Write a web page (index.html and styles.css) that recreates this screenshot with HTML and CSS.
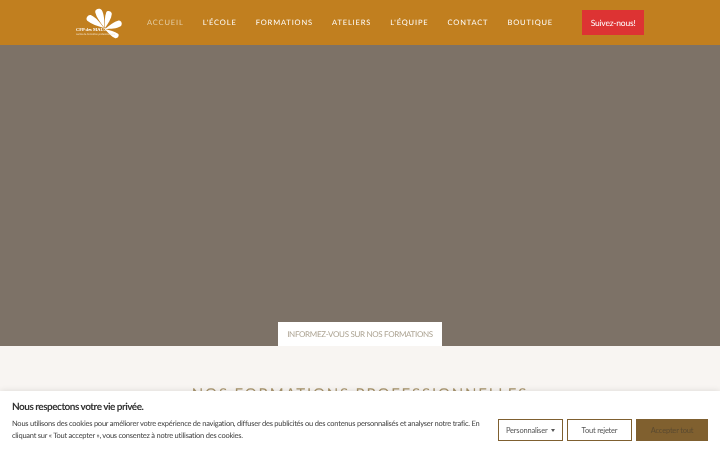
FILE: index.html
```html
<!DOCTYPE html>
<html lang="fr">
<head>
  <meta charset="UTF-8">
  <meta name="viewport" content="width=device-width, initial-scale=1.0">
  <title>CFP des MAUX</title>
  <link rel="stylesheet" href="styles.css">
</head>
<body>

  <!-- Header -->
  <header class="site-header">
    <a class="logo" href="#">
      <svg class="logo-flower" viewBox="0 0 38 34" width="38" height="34">
        <defs>
          <path id="petal" d="M0 0 C-2 -6 -4 -12 -3.500 -17 C-3 -20 2 -20 3 -17 C4 -12 2 -6 0 0 Z"/>
        </defs>
        <g fill="#ffffff">
          <use href="#petal" transform="translate(18 22) rotate(-55) scale(1.05)"/>
          <use href="#petal" transform="translate(18.500 22) rotate(-19) scale(1.05)"/>
          <use href="#petal" transform="translate(19 22) rotate(16) scale(0.9)"/>
          <use href="#petal" transform="translate(19 23) rotate(70) scale(0.92)"/>
          <use href="#petal" transform="translate(19 23) rotate(122) scale(0.8)"/>
        </g>
      </svg>
      <span class="logo-name">CFP des MAUX</span>
      <span class="logo-sub">centre de formation professionnelle</span>
    </a>
    <nav class="main-nav">
      <a class="active" href="#">ACCUEIL</a>
      <a href="#">L'ÉCOLE</a>
      <a href="#">FORMATIONS</a>
      <a href="#">ATELIERS</a>
      <a href="#">L'ÉQUIPE</a>
      <a href="#">CONTACT</a>
      <a href="#">BOUTIQUE</a>
    </nav>
    <a class="follow-btn" href="#">Suivez-nous!</a>
  </header>

  <!-- Hero -->
  <section class="hero">
    <a class="hero-btn" href="#">INFORMEZ-VOUS SUR NOS FORMATIONS</a>
  </section>

  <!-- Formations -->
  <section class="formations">
    <h2>NOS FORMATIONS PROFESSIONNELLES</h2>
  </section>

  <!-- Cookie banner -->
  <div class="cookie-banner">
    <div class="cookie-text">
      <h3>Nous respectons votre vie privée.</h3>
      <p>Nous utilisons des cookies pour améliorer votre expérience de navigation, diffuser des publicités ou des contenus personnalisés et analyser notre trafic. En cliquant sur « Tout accepter », vous consentez à notre utilisation des cookies.</p>
    </div>
    <div class="cookie-actions">
      <button class="cookie-btn">Personnaliser <span class="caret"></span></button>
      <button class="cookie-btn">Tout rejeter</button>
      <button class="cookie-btn accept">Accepter tout</button>
    </div>
  </div>

</body>
</html>
```

FILE: styles.css
```css
/* General Styles */
html, body {
  height: 450px;
  overflow: hidden;
}

body {
  font-family: Lato, "Liberation Sans", sans-serif;
  margin: 0;
  background: #f8f5f2;
  text-rendering: geometricPrecision;
  filter: blur(0.3px);
}

a {
  text-decoration: none;
}

/* Header */
.site-header {
  height: 45px;
  background: #c17f1f;
  display: flex;
  align-items: center;
  padding-left: 76px;
}

.logo {
  width: 71px;
  height: 45px;
  position: relative;
  flex-shrink: 0;
}

.logo-flower {
  position: absolute;
  left: 10px;
  top: 6px;
}

.logo-name {
  position: absolute;
  left: 0;
  top: 27px;
  font-family: "Liberation Serif", serif;
  font-size: 4.5px;
  font-weight: bold;
  line-height: 6px;
  color: #ffffff;
  white-space: nowrap;
}

.logo-sub {
  position: absolute;
  left: 0;
  top: 33px;
  font-size: 2.5px;
  line-height: 3px;
  color: #f3e3c8;
  white-space: nowrap;
}

.main-nav {
  display: flex;
  gap: 19.1px;
}

.main-nav a {
  font-size: 7.5px;
  letter-spacing: 0.85px;
  color: #ffffff;
}

.main-nav a.active {
  color: #e5cfa6;
}

.follow-btn {
  margin-left: 29px;
  width: 62px;
  height: 25px;
  background: #dd3333;
  color: #ffffff;
  font-size: 8.5px;
  letter-spacing: -0.2px;
  display: flex;
  align-items: center;
  justify-content: center;
}

/* Hero */
.hero {
  height: 301px;
  background: #7d7267;
  display: flex;
  justify-content: center;
  align-items: flex-end;
}

.hero-btn {
  width: 164px;
  height: 24px;
  background: #ffffff;
  color: #aca392;
  font-size: 8px;
  letter-spacing: -0.32px;
  display: flex;
  align-items: center;
  justify-content: center;
  white-space: nowrap;
}

/* Formations */
.formations {
  padding-top: 38px;
}

.formations h2 {
  margin: 0;
  text-align: center;
  font-size: 15px;
  font-weight: 400;
  letter-spacing: 1.8px;
  line-height: 20px;
  color: #a8946c;
}

/* Cookie banner */
.cookie-banner {
  position: fixed;
  left: 0;
  right: 0;
  bottom: 0;
  height: 59px;
  box-sizing: border-box;
  background: #ffffff;
  box-shadow: 0 0 6px rgba(0, 0, 0, 0.12);
  display: flex;
  padding: 10px 12px 0;
}

.cookie-text {
  width: 472px;
  flex-shrink: 0;
}

.cookie-text h3 {
  margin: 0 0 4px;
  font-size: 10px;
  font-weight: 700;
  letter-spacing: -0.5px;
  line-height: 13px;
  color: #333333;
}

.cookie-text p {
  margin: 0;
  font-size: 7.5px;
  letter-spacing: -0.24px;
  line-height: 12px;
  color: #404040;
}

.cookie-actions {
  display: flex;
  gap: 4px;
  margin-left: 14px;
  margin-top: 18px;
}

.cookie-btn {
  width: 65px;
  height: 22px;
  padding: 0;
  font-family: inherit;
  font-size: 7.5px;
  letter-spacing: -0.2px;
  color: #555555;
  background: #ffffff;
  border: 1px solid #7f6030;
}

.cookie-btn.accept {
  width: 72px;
  background: #80602f;
  color: #5a4a30;
}

.caret {
  display: inline-block;
  margin-left: 2px;
  border-left: 2.500px solid transparent;
  border-right: 2.500px solid transparent;
  border-top: 3px solid #555555;
  vertical-align: middle;
}
```
